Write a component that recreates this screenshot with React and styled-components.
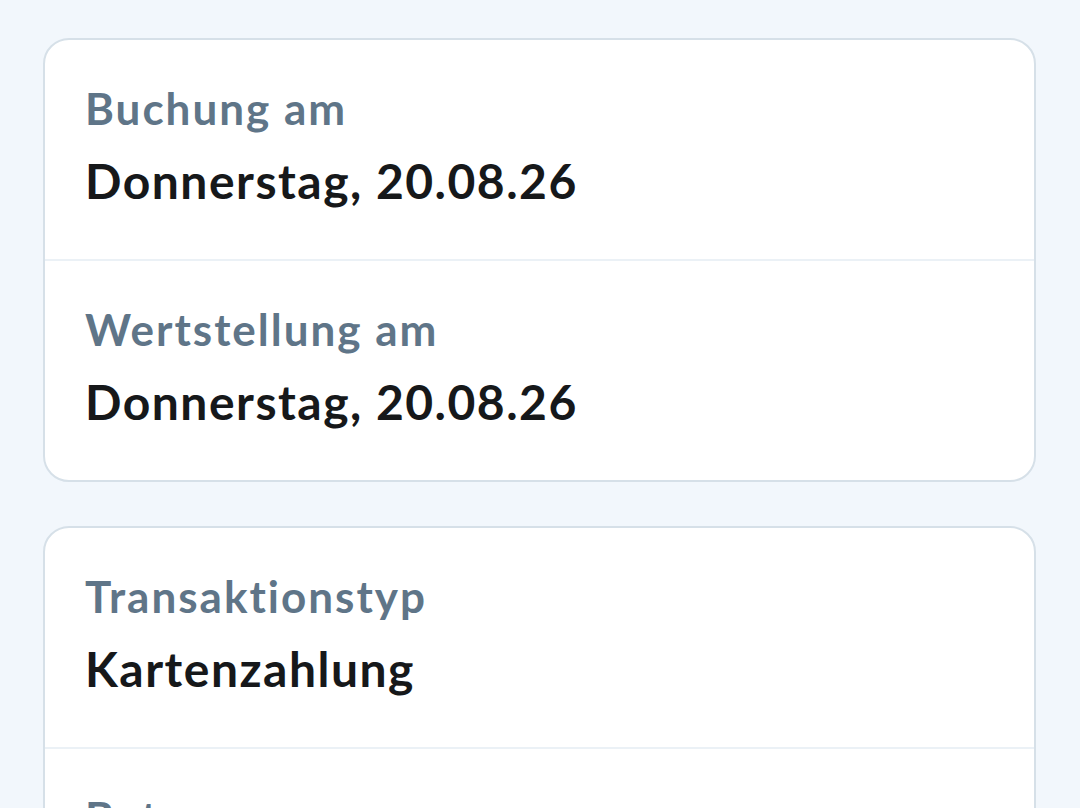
import React from 'react';
import styled, { createGlobalStyle } from 'styled-components';

const GlobalStyle = createGlobalStyle`
  html, body {
    margin: 0;
    padding: 0;
    background: #f2f7fc;
  }
  body {
    font-family: 'Lato', 'Noto Sans', sans-serif;
    -webkit-font-smoothing: antialiased;
  }
`;

const Page = styled.div`
  display: flex;
  flex-direction: column;
  gap: 44px;
  padding: 38px 44px 38px 43px;
  min-height: 808px;
  box-sizing: border-box;
`;

const Card = styled.section`
  background: #ffffff;
  border: 2px solid #d6e0e8;
  border-radius: 26px;
  overflow: hidden;
`;

const Row = styled.div`
  display: flex;
  flex-direction: column;
  padding: 42px 40px 50px;

  & + & {
    border-top: 2px solid #ebf1f6;
  }
`;

const Label = styled.span`
  font-size: 44px;
  line-height: 52px;
  font-weight: 700;
  letter-spacing: 2px;
  color: #5f7588;
`;

const Value = styled.span`
  margin-top: 19px;
  font-size: 48px;
  line-height: 56px;
  font-weight: 700;
  letter-spacing: 1.5px;
  color: #16181a;
`;

const groups = [
  [
    { label: 'Buchung am', value: 'Donnerstag, 20.08.26' },
    { label: 'Wertstellung am', value: 'Donnerstag, 20.08.26' },
  ],
  [
    { label: 'Transaktionstyp', value: 'Kartenzahlung' },
    { label: 'Betrag', value: '-12,90 €' },
  ],
];

export default function App() {
  return (
    <>
      <GlobalStyle />
      <Page>
        {groups.map((rows, i) => (
          <Card key={i}>
            {rows.map((r) => (
              <Row key={r.label}>
                <Label>{r.label}</Label>
                <Value>{r.value}</Value>
              </Row>
            ))}
          </Card>
        ))}
      </Page>
    </>
  );
}
